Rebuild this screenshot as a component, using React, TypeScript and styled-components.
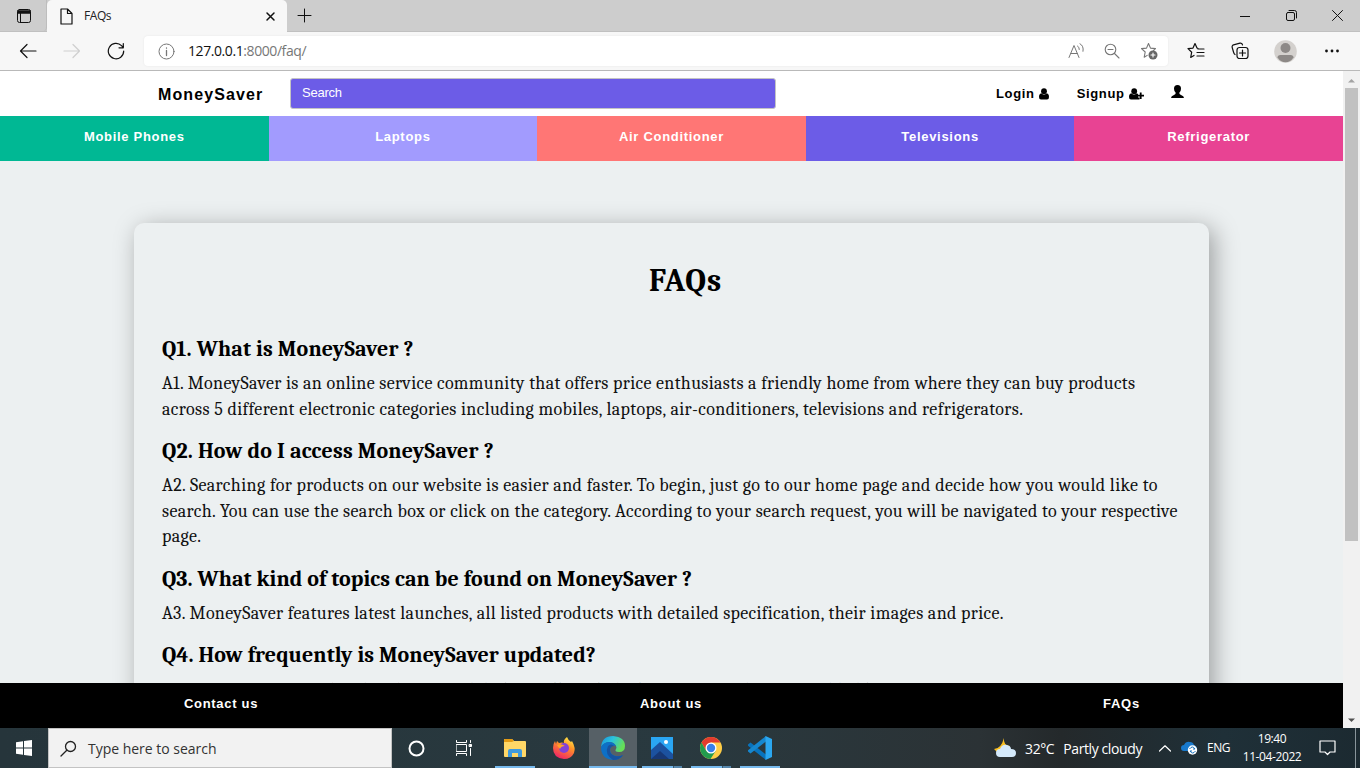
import React from "react";
import styled, { createGlobalStyle } from "styled-components";

const Global = createGlobalStyle`
  * { box-sizing: border-box; }
  body { margin: 0; overflow: hidden; background: #fff; }
  svg { display: block; flex: none; }
`;
const ui = `"Segoe UI", "Open Sans", "Noto Sans", sans-serif`;
const serif = `Cambria, "Liberation Serif", serif`;

const Screen = styled.div`
  width: 1360px; height: 768px; display: flex; flex-direction: column; overflow: hidden;
  font-family: ${ui};
`;
const TabStrip = styled.header`
  height: 32px; flex: none; background: #cdcdcd; display: flex; align-items: stretch;
  border-bottom: 1px solid #c0c0c0;
`;
const TabMenu = styled.div`width: 47px; padding: 8px 0 0 16px; border-right: 1px solid #bdbdbd; border-radius: 0 0 4px 0;`;
const Tab = styled.div`
  width: 240px; height: 32px; background: #f7f7f7; border-radius: 5px 5px 0 0;
  display: flex; align-items: center; padding: 0 10px 0 13px; font-size: 12px; color: #222;
`;
const TabTitle = styled.span`flex: 1; margin-left: 11px; letter-spacing: -0.45px; line-height: 16px;`;
const NewTab = styled.div`padding: 8px 0 0 10px; flex: 1;`;
const WindowButton = styled.div`width: 46px; display: flex; align-items: center; justify-content: center;`;
const Toolbar = styled.div`
  height: 39px; flex: none; background: #f7f7f7; border-bottom: 1px solid #b9b9b9;
  display: flex; align-items: center;
`;
const NavIcon = styled.div<{ $w: number }>`
  width: ${(p) => p.$w}px; display: flex; justify-content: center; align-items: center;
`;
const Address = styled.div`
  width: 1024px; height: 30px; background: #fff; border-radius: 4px; margin-left: 2px;
  display: flex; align-items: center; padding-left: 14px; font-size: 14px; color: #777;
  box-shadow: 0 0 2px #e4e4e4;
`;
const Url = styled.span`flex: 1; margin-left: 13px; letter-spacing: -0.42px; line-height: 20px; b { color: #111; font-weight: 400; }`;

const Viewport = styled.div`height: 657px; flex: none; display: flex;`;
const Page = styled.div`
  width: 1343px; background: #ecf0f1; display: flex; flex-direction: column;
  font-family: Arial, "Liberation Sans", sans-serif;
`;
const SiteHeader = styled.div`
  height: 45px; flex: none; background: #fff; display: flex; align-items: center;
  padding-left: 158px; font-weight: 700; color: #000;
`;
const Brand = styled.div`width: 132px; font-size: 16px; letter-spacing: 1.12px; padding-top: 2px; white-space: nowrap;`;
const Search = styled.div`
  width: 486px; height: 31px; background: #6c5ce7; border: 1px solid #c4c4c4; border-radius: 3px;
  color: #fff; font-size: 13px; font-weight: 400; line-height: 27px; padding-left: 11px; margin-bottom: 1px;
  letter-spacing: -0.25px;
`;
const Account = styled.div<{ $ml: number }>`
  margin-left: ${(p) => p.$ml}px; display: flex; align-items: center; gap: 4px; font-size: 13px; letter-spacing: 0.65px;
  line-height: 45px;
`;
const ProfileGlyph = styled.svg`margin-bottom: 4px;`;
const Categories = styled.nav`height: 45px; flex: none; display: grid; grid-template-columns: repeat(5, 1fr);`;
const Category = styled.div<{ $bg: string }>`
  background: ${(p) => p.$bg}; color: #fff; font-size: 13px; font-weight: 700; letter-spacing: 0.7px;
  text-align: center; line-height: 41px;
`;
const Body = styled.main`flex: 1; min-height: 0; overflow: hidden; padding: 62px 134px 0;`;
const Card = styled.article`
  height: 700px; border-radius: 10px; box-shadow: 5px 5px 25px rgba(0, 0, 0, 0.34); background: #ecf0f1;
  padding: 0 28px; font-family: ${serif}; color: #000; overflow: hidden;
`;
const Title = styled.h1`
  margin: 0; padding: 35px 0 0 28px; text-align: center; font-size: 32px; line-height: 46px;
  letter-spacing: 0.9px;
`;
const Question = styled.h2`margin: 0; font-size: 22px; line-height: 30px;`;
const Entry = styled.section<{ $mt: number }>`margin-top: ${(p) => p.$mt}px;`;
const Answer = styled.p<{ $mt?: number }>`
  margin: ${(p) => p.$mt ?? 7}px 0 0; font-size: 18px; line-height: 25.5px; color: #111;
`;
const Line = styled.span<{ $ls: number }>`display: block; white-space: nowrap; letter-spacing: ${(p) => p.$ls}px;`;
const Footer = styled.footer`
  height: 45px; flex: none; background: #000; color: #fff; display: grid; grid-template-columns: 442px 458px 443px;
  font-size: 13px; font-weight: 700; letter-spacing: 0.7px; text-align: center; line-height: 41px;
`;
const Scrollbar = styled.div`
  width: 17px; background: #f1f1f1; display: flex; flex-direction: column; align-items: center;
  justify-content: space-between; padding: 7px 0 5px;
`;
const Thumb = styled.div`width: 13px; height: 453px; background: #c1c1c1; margin: 5px 0 auto;`;

const Taskbar = styled.div`
  height: 40px; flex: none; display: flex; color: #fff;
  background: linear-gradient(90deg, #26353b 0%, #29393f 50%, #2b3235 72%, #24292b 78%, #1f3038 90%, #1c2a31 100%);
`;
const Start = styled.div`width: 48px; display: flex; align-items: center; justify-content: center;`;
const TaskSearch = styled.div`
  width: 344px; background: #f2f2f2; border: 1px solid #c3c3c3; color: #333; display: flex; align-items: center;
  padding-left: 11px; gap: 11px; font-size: 14px; letter-spacing: -0.02px;
`;
const underline = (split?: boolean) =>
  split
    ? "linear-gradient(90deg, #76b9ed 31px, #3c5a6e 31px, #3c5a6e 32px, #5687ac 32px)"
    : "linear-gradient(#76b9ed, #76b9ed)";
const TaskItem = styled.div<{ $w: number; $active?: boolean; $line?: number; $split?: boolean; $gap?: number }>`
  width: ${(p) => p.$w}px; display: flex; align-items: center; justify-content: center;
  margin-left: ${(p) => p.$gap ?? 0}px;
  background: ${(p) => underline(p.$split)} center bottom / ${(p) => p.$line ?? 0}px 2px no-repeat,
    ${(p) => (p.$active ? "#566066" : "transparent")};
`;
const Tray = styled.div`margin-left: auto; display: flex; align-items: center; font-size: 14px; white-space: nowrap;`;
const Weather = styled.div`display: flex; align-items: center; letter-spacing: -0.4px; span { margin-left: 9px; }`;
const TrayIcon = styled.div<{ $w: number; $l?: number; $r?: number }>`
  width: ${(p) => p.$w}px; padding: 0 ${(p) => p.$r ?? 0}px 0 ${(p) => p.$l ?? 0}px;
  display: flex; justify-content: center; align-items: center;
`;
const Lang = styled.div`width: 27px; font-size: 12px; letter-spacing: -0.5px; padding-bottom: 2px;`;
const Clock = styled.div`width: 76px; text-align: center; font-size: 12px; line-height: 18px; letter-spacing: -0.4px;`;
const Peek = styled.div`width: 5px; height: 40px; border-left: 1px solid #89959b;`;

const Ico = ({ w = 16, h = w, c = "#111", sw = 1, children }: any) => (
  <svg width={w} height={h} viewBox={`0 0 ${w} ${h}`} fill="none" stroke={c} strokeWidth={sw} strokeLinecap="round" strokeLinejoin="round">{children}</svg>
);
const star = "M8.5 1.5l2 4.6 5 .5-2.2 2M8.5 1.5l-2 4.600-5 .5 3.700 3.400-1 5.200 3-1.800";

const entries: { mt: number; q: string; qs: number; at?: number; a: [string, number][] }[] = [
  { mt: 30, q: "Q1. What is MoneySaver ?", qs: 0.13, a: [
    ["A1. MoneySaver is an online service community that offers price enthusiasts a friendly home from where they can buy products", 0.335],
    ["across 5 different electronic categories including mobiles, laptops, air-conditioners, televisions and refrigerators.", 0.37]] },
  { mt: 14, q: "Q2. How do I access MoneySaver ?", qs: 0.15, a: [
    ["A2. Searching for products on our website is easier and faster. To begin, just go to our home page and decide how you would like to", 0.38],
    ["search. You can use the search box or click on the category. According to your search request, you will be navigated to your respective", 0.363],
    ["page.", 0.36]] },
  { mt: 14, q: "Q3. What kind of topics can be found on MoneySaver ?", qs: 0.06, a: [
    ["A3. MoneySaver features latest launches, all listed products with detailed specification, their images and price.", 0.34]] },
  { mt: 14, q: "Q4. How frequently is MoneySaver updated?", qs: 0.05, at: 8, a: [
    ["A4. MoneySaver is updated and managed daily, so all fresh deals on new products are added here soon.", 0.34]] },
];

export default function App() {
  return (
    <Screen>
      <Global />
      <TabStrip>
        <TabMenu>
          <Ico><rect x="1.5" y="1.5" width="13" height="13" rx="2" /><path d="M2 3h12M2 4h12M2 5h12" strokeWidth="1.5" /><path d="M4.5 5v9" /></Ico>
        </TabMenu>
        <Tab>
          <Ico w={13} h={17} sw={1.2}><path d="M1 1h6.500l4.500 4.500v10.500H1zM7.500 1v4.500H12" /></Ico>
          <TabTitle>FAQs</TabTitle>
          <Ico w={13} sw={1.5}><path d="M3 3l7 7M10 3l-7 7" /></Ico>
        </Tab>
        <NewTab><Ico w={15}><path d="M7.500 1v13M1 7.500h13" /></Ico></NewTab>
        <WindowButton><Ico w={10}><path d="M0 5.500h10" /></Ico></WindowButton>
        <WindowButton><Ico w={11}><rect x=".5" y="2.500" width="8" height="8" rx="1.500" /><path d="M3 .5h5.500a2 2 0 0 1 2 2V8" /></Ico></WindowButton>
        <WindowButton><Ico w={11}><path d="M.5 .5l10 10M10.500 .5l-10 10" /></Ico></WindowButton>
      </TabStrip>
      <Toolbar>
        <NavIcon $w={55}><Ico w={18} sw={1.2}><path d="M17 9H1.500M8 2.500L1.500 9 8 15.500" /></Ico></NavIcon>
        <NavIcon $w={34}><Ico w={18} c="#cfcfcf" sw={1.2}><path d="M1 9h15.500M10 2.500L16.500 9 10 15.500" /></Ico></NavIcon>
        <NavIcon $w={53}><Ico w={18} sw={1.2}><path d="M16.700 9A7.700 7.700 0 1 1 14.500 3.700L16.300 5.700M16.300 1.500V5.800H12" /></Ico></NavIcon>
        <Address>
          <Ico w={17} c="#777"><circle cx="8.500" cy="8.500" r="7.500" /><path d="M8.500 7.500v5M8.500 5v.2" strokeWidth="1.300" /></Ico>
          <Url><b>127.0.0.1</b>:8000/faq/</Url>
          <NavIcon $w={36}><Ico w={17} h={16} c="#777"><path d="M1 14.500L6 2.500l5 12M2.800 10.500h6.500M9.500 3q2 1 1.800 3.500M12 .8q4 2 3 7.500" /></Ico></NavIcon>
          <NavIcon $w={36}><Ico w={16} c="#777" sw={1.100}><circle cx="6.500" cy="6.500" r="5.300" /><path d="M10.500 10.500l4.500 4.500M4 6.500h5" /></Ico></NavIcon>
          <NavIcon $w={38}><Ico w={18} c="#777" sw={1.100}><path d={star} /><circle cx="13" cy="13" r="4.500" fill="#666" stroke="none" /><path d="M11 13h4M13 11v4" stroke="#fff" /></Ico></NavIcon>
        </Address>
        <NavIcon $w={55}><Ico w={18} sw={1.200}><path d="M11 6.500L10 6 8 1.500l-2 4.600-5 .5 3.700 3.600-1 5.200L7 13.400M11 7h6M10 10.500h7M10 14h7" /></Ico></NavIcon>
        <NavIcon $w={33}><Ico w={18} sw={1.200}><rect x="6" y="5.500" width="11" height="11" rx="2.500" /><path d="M11.500 8v6M8.500 11h6M4 12.500Q3 12 2.500 10L1.200 5.500a2 2 0 0 1 1.300-2.600L9 1.200a2 2 0 0 1 2.500 1.600" /></Ico></NavIcon>
        <NavIcon $w={59}><svg width="23" height="23"><circle cx="11.500" cy="11.500" r="11.300" fill="#d4d1ce" /><circle cx="11.500" cy="8" r="5" fill="#8d8987" /><path d="M3.500 17.500q0-2.500 3-2.500h10q3 0 3 2.500-3 4.700-8 4.700t-8-4.700" fill="#8d8987" /></svg></NavIcon>
        <NavIcon $w={33}><Ico w={16} h={4} c="none"><g fill="#111"><circle cx="2.500" cy="2" r="1.400" /><circle cx="8" cy="2" r="1.400" /><circle cx="13.500" cy="2" r="1.400" /></g></Ico></NavIcon>
      </Toolbar>
      <Viewport>
        <Page>
          <SiteHeader>
            <Brand>MoneySaver</Brand>
            <Search>Search</Search>
            <Account $ml={220}>Login <svg width="10" height="12"><circle cx="5" cy="3.200" r="2.900" /><path d="M2.300 5.300Q5 7.700 7.700 5.300Q10 5.800 10 9Q10 11.500 8 11.500H2Q0 11.500 0 9Q0 5.800 2.300 5.300" /></svg></Account>
            <Account $ml={28}>Signup <svg width="15" height="12"><circle cx="5.200" cy="3.200" r="2.900" /><path d="M2.300 5.300Q5 7.700 7.700 5.300L9 6V9.500H10.500V11.500H2Q0 11.500 0 9Q0 5.800 2.300 5.300M10.800 4.500h1.800v2.200H15v1.800h-2.400v2.400h-1.800V8.500H8.700V6.700h2.100z" /></svg></Account>
            <Account $ml={27}><ProfileGlyph width="13" height="13"><path d="M6.500 0Q10 0 10 3.700Q10 6.300 8.300 7.800Q8 9.300 10 10Q13 10.800 13 13H0Q0 10.800 3 10Q5 9.300 4.700 7.800Q3 6.300 3 3.700Q3 0 6.500 0" /></ProfileGlyph></Account>
          </SiteHeader>
          <Categories>
            <Category $bg="#00b894">Mobile Phones</Category>
            <Category $bg="#a29bfe">Laptops</Category>
            <Category $bg="#ff7675">Air Conditioner</Category>
            <Category $bg="#6c5ce7">Televisions</Category>
            <Category $bg="#e84393">Refrigerator</Category>
          </Categories>
          <Body>
            <Card>
              <Title>FAQs</Title>
              {entries.map((e) => (
                <Entry key={e.q} $mt={e.mt}>
                  <Question><Line $ls={e.qs}>{e.q}</Line></Question>
                  <Answer $mt={e.at}>{e.a.map(([t, s]) => <Line key={t} $ls={s}>{t}</Line>)}</Answer>
                </Entry>
              ))}
            </Card>
          </Body>
          <Footer><div>Contact us</div><div>About us</div><div>FAQs</div></Footer>
        </Page>
        <Scrollbar>
          <svg width="7" height="5"><path d="M0 4.500L3.500 1 7 4.500z" fill="#a3a3a3" /></svg>
          <Thumb />
          <svg width="7" height="5"><path d="M0 .5L3.500 4 7 .5z" fill="#505050" /></svg>
        </Scrollbar>
      </Viewport>
      <Taskbar>
        <Start><svg width="16" height="16" fill="#fff"><path d="M0 2.200L7 1.200V7.500H0zM8 1L16 0V7.500H8zM0 8.500H7V14.800L0 13.800zM8 8.500H16V16L8 15z" /></svg></Start>
        <TaskSearch><Ico w={17} c="#222" sw={1.300}><circle cx="10.500" cy="6.500" r="5" /><path d="M6.800 10.200L1 16" /></Ico>Type here to search</TaskSearch>
        <TaskItem $w={48}><Ico w={17} c="#fff" sw={2}><circle cx="8.500" cy="8.500" r="7" /></Ico></TaskItem>
        <TaskItem $w={48}><Ico w={17} h={16} c="#fff"><path d="M.5 .5v2h10v-2M.5 15.500v-2h10v2M.5 4.500h10v7H.5zM14.500 .5v2M14.500 8.500v7" /><rect x="13.500" y="4.500" width="2" height="2" fill="#fff" /></Ico></TaskItem>
        <TaskItem $w={54} $line={40}><svg width="22" height="18"><path d="M0 1q0-1 1-1h7l2 2h11q1 0 1 1v14q0 1-1 1H1q-1 0-1-1z" fill="#ffd767" /><path d="M0 3V1q0-1 1-1h7l2 2-2 1z" fill="#e49b14" /><path d="M4 18v-6q0-2 2-2h10q2 0 2 2v6h-4v-4H8v4z" fill="#3f9ade" /></svg></TaskItem>
        <TaskItem $w={44}>
          <svg width="24" height="24"><defs><linearGradient id="ff" x1=".8" y1="0" x2=".3" y2="1"><stop stopColor="#fff04a" /><stop offset=".4" stopColor="#ff9228" /><stop offset="1" stopColor="#ef2068" /></linearGradient></defs><path d="M15 1q1 3 4 5l1-1q4 7 2 12-3 6-10 6Q1 22 1 12q0-4 2-7l1 3 1-3 2 2q3-1 5 0-1-3 3-6" fill="url(#ff)" /><circle cx="12" cy="12" r="5" fill="#8341d6" /><path d="M5 9q4-2 8 1-4 0-5 3-2-2-3-4" fill="#ffa128" /></svg>
        </TaskItem>
        <TaskItem $w={48} $gap={3} $active $line={48}>
          <svg width="24" height="24"><defs><linearGradient id="eg" x1="0" x2="1" y2=".4"><stop stopColor="#1893e0" /><stop offset=".5" stopColor="#2cc3db" /><stop offset="1" stopColor="#66df57" /></linearGradient></defs><path d="M0 11Q1 0 12 0q12 1 12 10 0 6-6 6-5 0-3-3 1-1 0-3-2-4-7-4-6 1-8 5" fill="url(#eg)" /><path d="M0 11q3-5 8-5 5 0 7 4-5-1-6 3 0 6 6 7 4 1 7-1-3 5-10 5Q0 23 0 11" fill="#0d70c6" /><path d="M7 10q-4 8 5 14 7 0 10-5-4 2-8 1-6-2-5-7 1-3 4-3-3-3-6 0" fill="#1753a0" /></svg>
        </TaskItem>
        <TaskItem $w={50} $line={40} $split><svg width="22" height="22"><path d="M0 0h22v22H0z" fill="#2aa6f3" /><path d="M0 13L9 5l13 12v5H0z" fill="#1c529f" /><path d="M0 22l9-8 9 8" fill="#173875" /><circle cx="15" cy="5" r="2" fill="#fff" /></svg></TaskItem>
        <TaskItem $w={48} $line={40} $split><svg width="22" height="22" viewBox="0 0 22 22"><circle cx="11" cy="11" r="11" fill="#ffcd46" /><path d="M1.500 5.500A11 11 0 0 1 20.500 5.500H11L6.200 13.800z" fill="#e33b2e" /><path d="M1.500 5.500A11 11 0 0 0 10.500 22L15.800 13.700 6.200 13.700z" fill="#229b4e" /><circle cx="11" cy="11" r="5.500" fill="#fff" /><circle cx="11" cy="11" r="4.200" fill="#397fe9" /></svg></TaskItem>
        <TaskItem $w={49} $line={40}><svg width="24" height="24"><path d="M0 8.500L2.500 6.500 18 18.500V24L0 9.800z" fill="#0873bd" /><path d="M0 15.500L2.500 17.500 18 5.500V0L0 14.200z" fill="#1687cf" /><path d="M17.500 0L24 3v18l-6.500 3z" fill="#2ba7f0" /></svg></TaskItem>
        <Tray>
          <Weather><svg width="22" height="20"><path d="M10 0q-1 7 6 8l-5 7H4L0 11q7 0 10-11" fill="#f9bf22" /><path d="M6 19q-4 0-4-4t4-4q2-5 7-4 4 1 4 4 5 0 5 4t-4 4z" fill="#d4e9fa" /></svg><span>32°C</span><span>Partly cloudy</span></Weather>
          <TrayIcon $w={39} $l={6}><Ico w={12} h={7} c="#fff" sw={1.200}><path d="M.5 6L6 .8 11.500 6" /></Ico></TrayIcon>
          <TrayIcon $w={26} $r={9}><svg width="17" height="14"><path d="M3 10Q0 10 0 7t3-3q2-4 6-3 3 0 4 3 3 1 3 4v2z" fill="#1879cc" /><circle cx="11.500" cy="9" r="4.700" fill="#fff" /><path d="M8.500 8q3-4 5.500 0h-2M14.500 10q-3 4-5.500 0h2" fill="none" stroke="#1470bd" /></svg></TrayIcon>
          <Lang>ENG</Lang>
          <Clock>19:40<br />11-04-2022</Clock>
          <TrayIcon $w={45} $r={11}><Ico w={17} h={16} c="#fff" sw={1.200}><path d="M1 1h15v11h-5l-2.500 2.500L6 12H1z" /></Ico></TrayIcon>
          <Peek />
        </Tray>
      </Taskbar>
    </Screen>
  );
}
